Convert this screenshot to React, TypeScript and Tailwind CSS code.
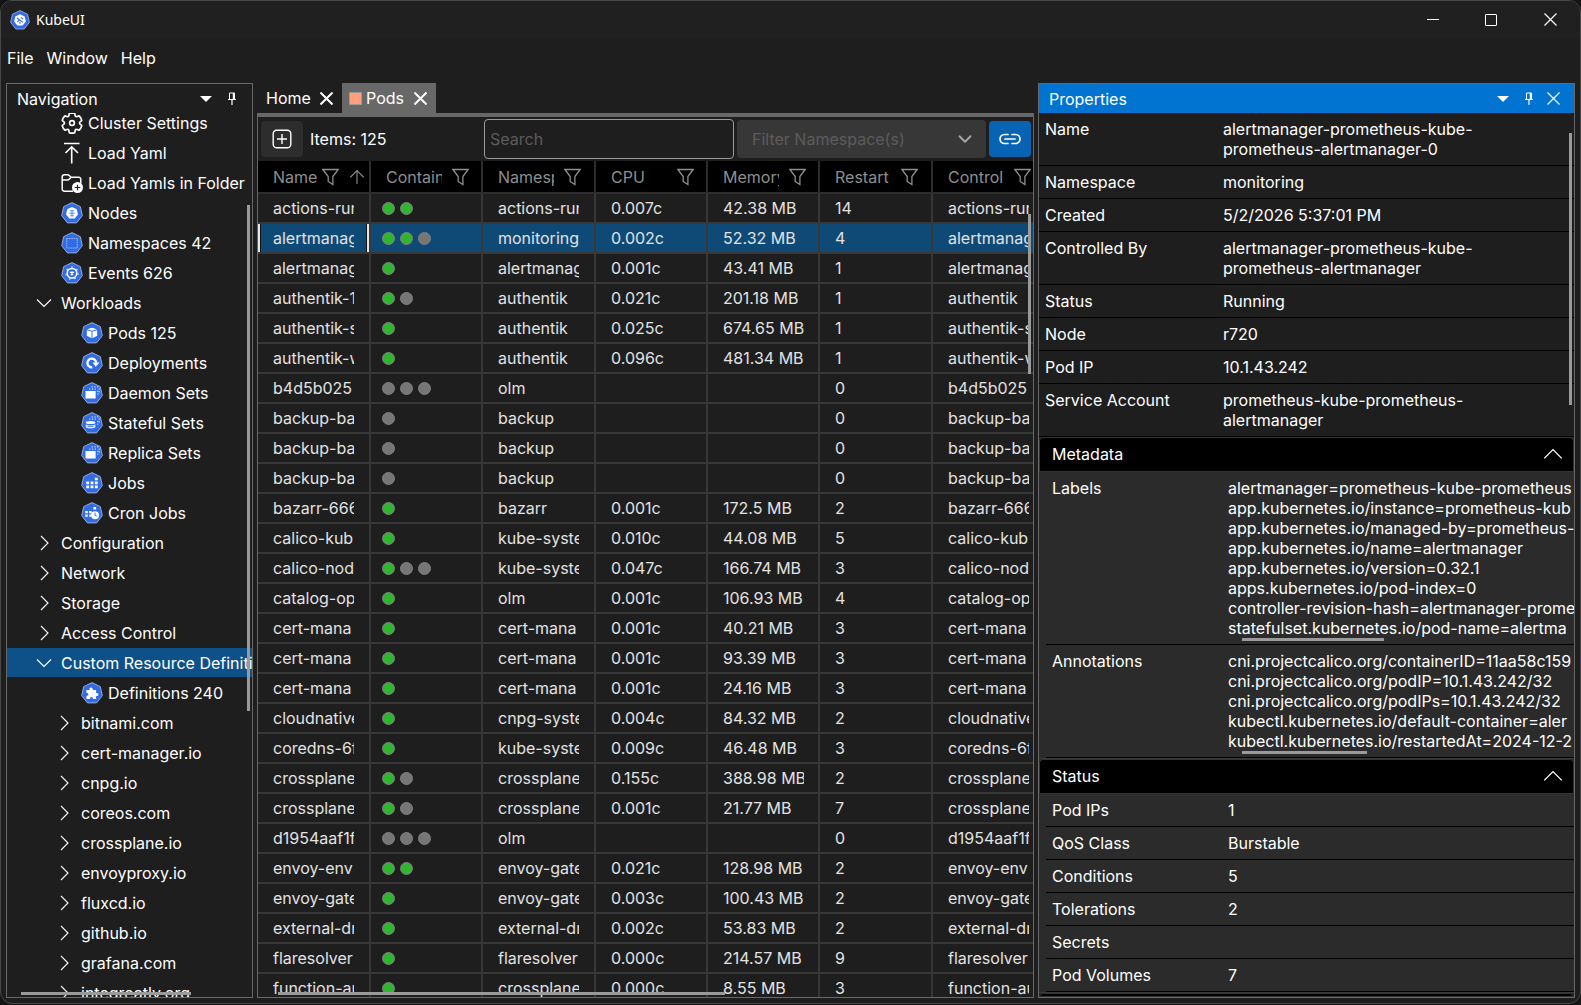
import React from 'react';
import { ArrowUp, ChevronDown } from 'lucide-react';

type Glyph =
  | 'logo'
  | 'node'
  | 'ns'
  | 'event'
  | 'pod'
  | 'deploy'
  | 'daemon'
  | 'stateful'
  | 'replica'
  | 'job'
  | 'cronjob'
  | 'crd';

const StackDots = () => (
  <path
    d="M9 7.8h8.6M18 9.5v5M11.5 5.4h8.5M19.6 7v4.5"
    fill="none"
    stroke="#c9d8fb"
    strokeWidth="1.3"
    strokeDasharray="1.3 1.6"
  />
);

const Stack = () => (
  <>
    <rect x="5.2" y="9.6" width="10.6" height="8" rx="0.6" fill="#fff" />
    <StackDots />
  </>
);

const glyphs: Record<Glyph, React.ReactNode> = {
  logo: (
    <>
      <path d="M12 5.2l5.4 2.6 1.3 5.8-3.7 4.6H9l-3.7-4.6 1.3-5.8z" fill="#fff" />
      <path d="M8.5 9.5l7 5M9 14l2-2M13 9l2.5 1.5M12 16v-2" stroke="#326ce5" strokeWidth="1.3" />
    </>
  ),
  node: (
    <>
      <path d="M12 5.5l5 2.4 1.2 5.3-3.4 4.3H9.2l-3.4-4.3L7 7.9z" fill="#fff" />
      <path d="M10 9.3h4M9 12h6M10 14.7h4M12 9v6" stroke="#326ce5" strokeWidth="0.8" />
    </>
  ),
  ns: <rect x="6.5" y="7" width="11" height="10" fill="none" stroke="#a9c2f7" strokeWidth="0.9" strokeDasharray="1.6 0.8" />,
  event: (
    <>
      <circle cx="12" cy="12" r="5" fill="none" stroke="#fff" strokeWidth="1.6" />
      <circle cx="12" cy="12" r="6.4" fill="none" stroke="#fff" strokeWidth="1.2" strokeDasharray="1.4 4.35" />
      <path d="M9.8 11.2h4.4M10.6 13.5h2.8M12 10v4" stroke="#fff" strokeWidth="1.3" />
    </>
  ),
  pod: (
    <>
      <path d="M12 6.3l5.2 1.5-5.2 1.5-5.2-1.5z" fill="#fff" />
      <path d="M6.6 8.8l4.9 1.5v6.9l-4.9-2.6zM17.4 8.8l-4.9 1.5v6.9l4.9-2.6z" fill="#fff" />
    </>
  ),
  deploy: (
    <>
      <path d="M12.3 16.3a4.6 4.6 0 1 1 4.1-5" fill="none" stroke="#fff" strokeWidth="2.4" />
      <path d="M12.6 11.2h7.2l-3.9 4.4z" fill="#fff" />
    </>
  ),
  daemon: <Stack />,
  stateful: (
    <>
      <ellipse cx="10.5" cy="11.3" rx="5" ry="1.6" fill="#fff" />
      <path d="M5.5 13v3c0 2 10 2 10 0v-3c-1.5 1.5-8.5 1.5-10 0z" fill="#dfe8fd" />
      <path d="M7.5 15.2h6" stroke="#326ce5" strokeWidth="0.9" />
      <StackDots />
    </>
  ),
  replica: <Stack />,
  job: (
    <path
      d="M6 10.3h3v2.8H6zM10.5 10.3h3v2.8h-3zM15 10.3h3v2.8h-3zM6 14.4h3v2.8H6zM10.5 14.4h3v2.8h-3zM15 14.4h3v2.8h-3zM15 6.2h3V9h-3z"
      fill="#fff"
    />
  ),
  cronjob: (
    <>
      <path d="M5 9.6h2.6v2.4H5zM9 9.6h2.6v2.4H9zM5 13.4h2.6v2.4H5zM9 13.4h2.6v2.4H9zM13.5 5.4h2.8V8h-2.8z" fill="#fff" />
      <circle cx="15.2" cy="14" r="4.2" fill="#fff" />
      <path d="M15.2 11.4V14l1.8 1" fill="none" stroke="#326ce5" strokeWidth="1" />
    </>
  ),
  crd: (
    <path
      d="M6.2 8.6h3.3c-.9-3.4 4-3.4 3.2 0h3.6v3.2c3.3-.8 3.3 3.7 0 3V18h-3.4c.7-2.8-3.5-2.8-2.9 0H6.2v-3.4c2.7.6 2.7-3.3 0-2.8z"
      fill="#fff"
    />
  ),
};

const KubeIcon: React.FC<{ glyph: Glyph; className?: string }> = ({ glyph, className = 'size-[22px]' }) => (
  <svg viewBox="0.5 0.5 23 22.5" className={`${className} shrink-0`} aria-hidden="true">
    <path
      d="M12 .9l8.7 4.2 2.1 9.4-6 7.6H7.2l-6-7.6 2.1-9.4z"
      fill="#326ce5"
      stroke="#aeb9d6"
      strokeWidth="0.9"
      strokeLinejoin="round"
    />
    {glyphs[glyph]}
  </svg>
);

const GearIcon = () => (
  <svg viewBox="1.4 1.4 21.2 21.2" className="size-[22px] shrink-0" fill="none" stroke="#fff" strokeWidth="1.6" aria-hidden="true">
    <path d="M12.01 2.25c.74 0 1.47.1 2.18.25.32.07.55.33.59.65l.17 1.53a1.38 1.38 0 0 0 1.92 1.11l1.4-.61c.3-.13.64-.06.85.17a9.79 9.79 0 0 1 2.2 3.8c.1.3 0 .63-.26.82l-1.25.92a1.38 1.38 0 0 0 0 2.22l1.25.92c.26.19.36.52.27.82a9.8 9.8 0 0 1-2.2 3.8.75.75 0 0 1-.85.17l-1.4-.62a1.38 1.38 0 0 0-1.93 1.12l-.17 1.52a.75.75 0 0 1-.58.65 9.52 9.52 0 0 1-4.4 0 .75.75 0 0 1-.57-.65l-.17-1.52a1.38 1.38 0 0 0-1.93-1.11l-1.4.62a.75.75 0 0 1-.85-.18 9.8 9.8 0 0 1-2.2-3.8c-.1-.3 0-.63.27-.82l1.24-.92a1.38 1.38 0 0 0 0-2.22l-1.24-.92a.75.75 0 0 1-.28-.82 9.8 9.8 0 0 1 2.2-3.8c.23-.23.57-.3.86-.17l1.4.62c.4.17.86.15 1.25-.08.38-.22.63-.6.68-1.04l.17-1.53c.04-.32.27-.58.58-.65.72-.16 1.45-.24 2.2-.25z" />
    <circle cx="12" cy="12" r="2.3" />
  </svg>
);

const UploadIcon = () => (
  <svg viewBox="0 0 22 22" className="size-[22px] shrink-0" fill="none" stroke="#fff" strokeWidth="1.6" aria-hidden="true">
    <path d="M3 1.5h15.5M10.7 21.5V5M4.5 11l6.2-6.2L17 11" />
  </svg>
);

const FolderAddIcon = () => (
  <svg viewBox="0 0 22 20" className="h-5 w-[22px] shrink-0" fill="none" aria-hidden="true">
    <path
      d="M12 18.2H3.4a2.2 2.2 0 0 1-2.2-2.2V4A2.2 2.2 0 0 1 3.4 1.7h3.2c.6 0 1 .2 1.4.6L10 4.2h7.6A2.2 2.2 0 0 1 19.8 6.4v4M1.2 7h5.4c.6 0 1-.2 1.4-.6L10 4.2"
      stroke="#fff"
      strokeWidth="1.5"
    />
    <circle cx="16.5" cy="14.5" r="5.5" fill="#fff" />
    <path d="M16.5 11.7v5.6M13.7 14.5h5.6" stroke="#1e1e1e" strokeWidth="1.2" />
  </svg>
);

const FilterIcon = () => (
  <svg viewBox="0 0 17 18" className="h-[18px] w-[17px] shrink-0" fill="none" stroke="#8e8e8e" strokeWidth="1.3" aria-hidden="true">
    <path d="M.9 1.5h15.2l-5.2 7v8L6.2 13.5v-5z" />
  </svg>
);

const PinIcon = () => (
  <svg viewBox="0 0 8 13" className="h-[13px] w-2" fill="none" aria-hidden="true">
    <path d="M1.5 7V1h5v6" stroke="#fff" />
    <path d="M5.5 1v6" stroke="#fff" strokeWidth="1.4" />
    <path d="M0 7.5h8M4 7.5V13" stroke="#fff" strokeWidth="1.2" />
  </svg>
);

const CaretIcon = () => (
  <svg viewBox="0 0 12 6" className="h-1.5 w-3" aria-hidden="true">
    <path d="M0 0h12L6 6z" fill="#fff" />
  </svg>
);

const CrossIcon: React.FC<{ bold?: boolean }> = ({ bold }) => (
  <svg viewBox="0 0 13 13" className="size-[13px]" stroke="#fff" strokeWidth={bold ? 2 : 1.2} aria-hidden="true">
    <path d="M.5.5l12 12M12.5.5l-12 12" />
  </svg>
);

const Chevron: React.FC<{ dir: 'right' | 'down' | 'up'; className?: string }> = ({ dir, className = 'size-4' }) => {
  const d = { right: 'M5 1l7 7-7 7', down: 'M1 4.5l7 7 7-7', up: 'M1 11.5l7-7 7 7' }[dir];
  return (
    <svg viewBox="0 0 16 16" className={`${className} shrink-0`} fill="none" stroke="#fff" strokeWidth="1.1" aria-hidden="true">
      <path d={d} />
    </svg>
  );
};

interface TreeItem {
  label: string;
  level: 1 | 2 | 3;
  icon?: React.ReactNode;
  open?: boolean;
  selected?: boolean;
}

const kube = (label: string, glyph: Glyph, level: 2 | 3 = 3): TreeItem => ({
  label,
  level,
  icon: <KubeIcon glyph={glyph} />,
});

const tree: TreeItem[] = [
  { label: 'Cluster Settings', level: 2, icon: <GearIcon /> },
  { label: 'Load Yaml', level: 2, icon: <UploadIcon /> },
  { label: 'Load Yamls in Folder', level: 2, icon: <FolderAddIcon /> },
  kube('Nodes', 'node', 2),
  kube('Namespaces 42', 'ns', 2),
  kube('Events 626', 'event', 2),
  { label: 'Workloads', level: 1, open: true },
  kube('Pods 125', 'pod'),
  kube('Deployments', 'deploy'),
  kube('Daemon Sets', 'daemon'),
  kube('Stateful Sets', 'stateful'),
  kube('Replica Sets', 'replica'),
  kube('Jobs', 'job'),
  kube('Cron Jobs', 'cronjob'),
  { label: 'Configuration', level: 1 },
  { label: 'Network', level: 1 },
  { label: 'Storage', level: 1 },
  { label: 'Access Control', level: 1 },
  { label: 'Custom Resource Definitions', level: 1, open: true, selected: true },
  kube('Definitions 240', 'crd'),
  { label: 'bitnami.com', level: 2 },
  { label: 'cert-manager.io', level: 2 },
  { label: 'cnpg.io', level: 2 },
  { label: 'coreos.com', level: 2 },
  { label: 'crossplane.io', level: 2 },
  { label: 'envoyproxy.io', level: 2 },
  { label: 'fluxcd.io', level: 2 },
  { label: 'github.io', level: 2 },
  { label: 'grafana.com', level: 2 },
  { label: 'integreatly.org', level: 2 },
];

// name, running containers, finished containers, namespace, cpu, memory, restarts, controlled by
type PodRow = [string, number, number, string, string, string, number, string];

const pods: PodRow[] = [
  ['actions-run', 2, 0, 'actions-run', '0.007c', '42.38 MB', 14, 'actions-run'],
  ['alertmanag', 2, 1, 'monitoring', '0.002c', '52.32 MB', 4, 'alertmanag'],
  ['alertmanag', 1, 0, 'alertmanag', '0.001c', '43.41 MB', 1, 'alertmanag'],
  ['authentik-1', 1, 1, 'authentik', '0.021c', '201.18 MB', 1, 'authentik'],
  ['authentik-s', 1, 0, 'authentik', '0.025c', '674.65 MB', 1, 'authentik-s'],
  ['authentik-w', 1, 0, 'authentik', '0.096c', '481.34 MB', 1, 'authentik-w'],
  ['b4d5b025', 0, 3, 'olm', '', '', 0, 'b4d5b025'],
  ['backup-ba', 0, 1, 'backup', '', '', 0, 'backup-ba'],
  ['backup-ba', 0, 1, 'backup', '', '', 0, 'backup-ba'],
  ['backup-ba', 0, 1, 'backup', '', '', 0, 'backup-ba'],
  ['bazarr-666', 1, 0, 'bazarr', '0.001c', '172.5 MB', 2, 'bazarr-666'],
  ['calico-kub', 1, 0, 'kube-syste', '0.010c', '44.08 MB', 5, 'calico-kub'],
  ['calico-nod', 1, 2, 'kube-syste', '0.047c', '166.74 MB', 3, 'calico-nod'],
  ['catalog-op', 1, 0, 'olm', '0.001c', '106.93 MB', 4, 'catalog-op'],
  ['cert-mana', 1, 0, 'cert-mana', '0.001c', '40.21 MB', 3, 'cert-mana'],
  ['cert-mana', 1, 0, 'cert-mana', '0.001c', '93.39 MB', 3, 'cert-mana'],
  ['cert-mana', 1, 0, 'cert-mana', '0.001c', '24.16 MB', 3, 'cert-mana'],
  ['cloudnative', 1, 0, 'cnpg-syste', '0.004c', '84.32 MB', 2, 'cloudnative'],
  ['coredns-6f', 1, 0, 'kube-syste', '0.009c', '46.48 MB', 3, 'coredns-6f'],
  ['crossplane', 1, 1, 'crossplane', '0.155c', '388.98 MB', 2, 'crossplane'],
  ['crossplane', 1, 1, 'crossplane', '0.001c', '21.77 MB', 7, 'crossplane'],
  ['d1954aaf1f', 0, 3, 'olm', '', '', 0, 'd1954aaf1f'],
  ['envoy-env', 2, 0, 'envoy-gate', '0.021c', '128.98 MB', 2, 'envoy-env'],
  ['envoy-gate', 1, 0, 'envoy-gate', '0.003c', '100.43 MB', 2, 'envoy-gate'],
  ['external-dn', 1, 0, 'external-dn', '0.002c', '53.83 MB', 2, 'external-dn'],
  ['flaresolver', 1, 0, 'flaresolver', '0.000c', '214.57 MB', 9, 'flaresolver'],
  ['function-au', 1, 0, 'crossplane', '0.000c', '8.55 MB', 3, 'function-au'],
];

const columns = [
  { title: 'Name', width: 'w-[113px]' },
  { title: 'Contain', width: 'w-28' },
  { title: 'Namesp', width: 'w-[113px]' },
  { title: 'CPU', width: 'w-28' },
  { title: 'Memory', width: 'w-28' },
  { title: 'Restart', width: 'w-[113px]' },
  { title: 'Control', width: 'w-[113px]' },
];

const summary = [
  ['Name', 'alertmanager-prometheus-kube-prometheus-alertmanager-0'],
  ['Namespace', 'monitoring'],
  ['Created', '5/2/2026 5:37:01 PM'],
  ['Controlled By', 'alertmanager-prometheus-kube-prometheus-alertmanager'],
  ['Status', 'Running'],
  ['Node', 'r720'],
  ['Pod IP', '10.1.43.242'],
  ['Service Account', 'prometheus-kube-prometheus-alertmanager'],
];

const labels = [
  'alertmanager=prometheus-kube-prometheus',
  'app.kubernetes.io/instance=prometheus-kub',
  'app.kubernetes.io/managed-by=prometheus-',
  'app.kubernetes.io/name=alertmanager',
  'app.kubernetes.io/version=0.32.1',
  'apps.kubernetes.io/pod-index=0',
  'controller-revision-hash=alertmanager-prome',
  'statefulset.kubernetes.io/pod-name=alertma',
];

const annotations = [
  'cni.projectcalico.org/containerID=11aa58c159',
  'cni.projectcalico.org/podIP=10.1.43.242/32',
  'cni.projectcalico.org/podIPs=10.1.43.242/32',
  'kubectl.kubernetes.io/default-container=aler',
  'kubectl.kubernetes.io/restartedAt=2024-12-2',
];

const status = [
  ['Pod IPs', '1'],
  ['QoS Class', 'Burstable'],
  ['Conditions', '5'],
  ['Tolerations', '2'],
  ['Secrets', ''],
  ['Pod Volumes', '7'],
];

const TitleBar = () => (
  <header className="flex h-[37px] shrink-0 items-center bg-[#202020] pl-[9px]">
    <KubeIcon glyph="logo" className="size-5" />
    <span className="ml-1.5 font-['Noto_Sans'] text-sm">KubeUI</span>
    <div className="ml-auto flex h-full">
      <button aria-label="Minimize" className="flex w-[58px] items-center justify-center">
        <span className="h-px w-3 bg-white" />
      </button>
      <button aria-label="Maximize" className="flex w-[58px] items-center justify-center">
        <span className="size-3 rounded-[1px] border border-white" />
      </button>
      <button aria-label="Close" className="flex w-[60px] items-center justify-center">
        <CrossIcon />
      </button>
    </div>
  </header>
);

const NavRow: React.FC<{ item: TreeItem }> = ({ item }) => {
  const indent = item.icon
    ? item.level === 2
      ? 'pl-[54px] gap-[5px]'
      : 'pl-[74px] gap-[5px]'
    : item.level === 1
      ? 'pl-[29px] gap-[9px]'
      : 'pl-[49px] gap-[9px]';
  return (
    <li className="h-[30px]">
      <button
        className={`flex h-[29px] w-full items-center overflow-hidden whitespace-nowrap text-left ${indent} ${item.selected ? 'bg-[#0e5188]' : ''}`}
      >
        {item.icon ?? <Chevron dir={item.open ? 'down' : 'right'} />}
        {item.label}
      </button>
    </li>
  );
};

const Navigation = () => (
  <nav className="relative flex w-[247px] shrink-0 flex-col overflow-hidden border border-[#686868]">
    <div className="flex h-[29px] shrink-0 items-center pl-2.5 pr-4">
      <h2 className="text-base">Navigation</h2>
      <button aria-label="Navigation options" className="ml-auto">
        <CaretIcon />
      </button>
      <button aria-label="Pin navigation" className="ml-4">
        <PinIcon />
      </button>
    </div>
    <div className="min-h-0 flex-1 overflow-hidden">
      <ul className="-mt-[5px]">
        {tree.map((item) => (
          <NavRow key={item.label} item={item} />
        ))}
      </ul>
    </div>
    <div className="absolute right-0.5 top-[121px] h-[506px] w-[3px] bg-[#9a9a9a]" />
    <div className="absolute bottom-0.5 left-3.5 h-[3px] w-[170px] bg-[#9a9a9a]" />
  </nav>
);

const Toolbar = () => (
  <div className="flex h-11 shrink-0 items-center pl-[3px] pr-0.5">
    <button aria-label="Add" className="flex h-9 w-[42px] items-center justify-center rounded bg-[#2d2d2d]">
      <svg viewBox="0 0 20 20" className="size-5" fill="none" stroke="#fff" strokeWidth="1.4" aria-hidden="true">
        <rect x="1.2" y="1.2" width="17.6" height="17.6" rx="3.5" />
        <path d="M10 5v10M5 10h10" />
      </svg>
    </button>
    <span className="ml-[7px]">Items: 125</span>
    <input
      aria-label="Search"
      placeholder="Search"
      className="ml-auto h-10 w-[250px] rounded border border-[#9a9a9a] bg-transparent px-[5px] placeholder:text-[#5c5c5c]"
    />
    <div className="relative ml-[3px]">
      <select
        aria-label="Filter Namespace(s)"
        className="block h-[38px] w-[249px] appearance-none rounded bg-[#373737] pl-[15px] text-[#5c5c5c]"
      >
        <option>Filter Namespace(s)</option>
      </select>
      <ChevronDown className="pointer-events-none absolute right-2.5 top-2 size-[22px] text-[#a8a8a8]" />
    </div>
    <button aria-label="Link" className="ml-[3px] flex h-9 w-[42px] items-center justify-center rounded bg-[#0863b5]">
      <svg viewBox="0 0 22 12" className="h-3 w-[22px]" fill="none" stroke="#fff" strokeWidth="1.7" strokeLinecap="round" aria-hidden="true">
        <path d="M9 1.5H5.5a4.5 4.5 0 0 0 0 9H9M13 1.5h3.5a4.5 4.5 0 0 1 0 9H13M6 6h10" />
      </svg>
    </button>
  </div>
);

const Dots: React.FC<{ running: number; done: number }> = ({ running, done }) => (
  <div className="flex gap-[5px]">
    {Array.from({ length: running + done }, (_, i) => (
      <span
        key={i}
        className={`size-[13px] rounded-full border border-[#808080] ${i < running ? 'bg-[#2fb52f]' : 'bg-[#767676]'}`}
      />
    ))}
  </div>
);

const PodTable = () => (
  <div className="relative min-h-0 flex-1 overflow-hidden">
    <table className="w-[788px] table-fixed border-separate border-spacing-0 text-left text-[#e2e2e2]">
      <colgroup>
        {columns.map((c) => (
          <col key={c.title} className={c.width} />
        ))}
      </colgroup>
      <thead>
        <tr className="h-[33px] bg-black text-[#8e8e8e]">
          {columns.map((c, i) => (
            <th key={c.title} className="border-b-2 border-r-2 border-[#2d2d2d] p-0 pl-[15px] font-normal">
              <div className="flex items-center">
                {i === 0 ? (
                  <>
                    <span className="w-11">{c.title}</span>
                    <span className="ml-[5px]">
                      <FilterIcon />
                    </span>
                    <ArrowUp className="ml-[7px] size-[22px] shrink-0" strokeWidth={1.2} />
                  </>
                ) : (
                  <>
                    <span className="mr-2.5 w-14 shrink-0 overflow-hidden">{c.title}</span>
                    <FilterIcon />
                  </>
                )}
              </div>
            </th>
          ))}
        </tr>
      </thead>
      <tbody>
        {pods.map(([name, running, done, ns, cpu, memory, restarts, owner], row) => (
          <tr key={row} className={`h-[30px] ${row === 1 ? 'bg-[#0f4a77]' : ''}`}>
            {[name, null, ns, cpu, memory, restarts, owner].map((value, i) => (
              <td key={i} className={`relative border-b-2 border-r-2 border-[#373737] p-0 ${i === 1 ? 'pl-[11px]' : 'px-[15px]'}`}>
                {i === 1 ? (
                  <Dots running={running} done={done} />
                ) : (
                  <div className="w-[81px] overflow-hidden whitespace-nowrap">{value}</div>
                )}
                {row === 1 && i === 0 && (
                  <span className="absolute inset-0 border-x-2 border-[#e6e6e6] shadow-[inset_1px_0_0_#111,inset_-1px_0_0_#111]" />
                )}
              </td>
            ))}
          </tr>
        ))}
      </tbody>
    </table>
    <div className="absolute right-0.5 top-[53px] h-[160px] w-[3px] bg-[#9a9a9a]" />
    <div className="absolute bottom-0.5 left-5 h-[3px] w-[447px] bg-[#9a9a9a]" />
  </div>
);

const Documents = () => (
  <main className="flex min-w-0 flex-1 flex-col">
    <div className="flex h-[30px] shrink-0">
      <div className="flex w-[85px] items-center justify-between pl-[9px] pr-[9px]">
        <button>Home</button>
        <button aria-label="Close Home">
          <CrossIcon bold />
        </button>
      </div>
      <div className="flex w-[94px] items-center bg-[#686868] pl-[7px] pr-[9px]">
        <span className="size-[13px] border border-[#999] bg-[#ffa07a]" />
        <button className="ml-1">Pods</button>
        <button aria-label="Close Pods" className="ml-auto">
          <CrossIcon bold />
        </button>
      </div>
    </div>
    <div className="flex min-h-0 flex-1 flex-col border border-t-4 border-[#686868]">
      <Toolbar />
      <PodTable />
    </div>
  </main>
);

const Section: React.FC<{ title: string; children?: React.ReactNode }> = ({ title, children }) => (
  <section className="border-b border-[#3a3a3a] bg-[#2b2b2b]">
    <button className="flex h-[35px] w-full items-center justify-between rounded-t border border-[#333] bg-black pb-0.5 pl-3 pr-2.5 text-left">
      {title}
      <Chevron dir="up" className="size-5" />
    </button>
    <dl className="pl-[7px]">{children}</dl>
  </section>
);

const SectionRow: React.FC<{ label: string; values: string[]; bar?: string }> = ({ label, values, bar }) => (
  <div className="relative flex border-b border-black py-1.5 pl-1.5">
    <dt className="w-44 shrink-0 leading-5">{label}</dt>
    <dd className="min-h-5 min-w-0 flex-1 overflow-hidden whitespace-nowrap leading-5">
      {values.map((v) => (
        <div key={v}>{v}</div>
      ))}
    </dd>
    {bar && <span className={`absolute bottom-[3px] left-[196px] h-[3px] bg-[#9a9a9a] ${bar}`} />}
  </div>
);

const Properties = () => (
  <aside className="relative flex w-[537px] shrink-0 flex-col overflow-hidden border border-[#686868]">
    <div className="flex h-[29px] shrink-0 items-center bg-[#0074d0] pl-2.5 pr-3.5">
      <h2 className="text-base">Properties</h2>
      <button aria-label="Properties options" className="ml-auto">
        <CaretIcon />
      </button>
      <button aria-label="Pin properties" className="ml-4">
        <PinIcon />
      </button>
      <button aria-label="Close properties" className="ml-3.5">
        <CrossIcon />
      </button>
    </div>
    <dl>
      {summary.map(([label, value]) => (
        <div key={label} className="flex border-b border-black py-1.5 pl-1.5 leading-5">
          <dt className="w-[178px] shrink-0">{label}</dt>
          <dd className="w-[290px]">{value}</dd>
        </div>
      ))}
    </dl>
    <Section title="Metadata">
      <SectionRow label="Labels" values={labels} bar="w-[142px]" />
      <SectionRow label="Annotations" values={annotations} bar="w-[125px]" />
    </Section>
    <Section title="Status">
      {status.map(([label, value]) => (
        <SectionRow key={label} label={label} values={[value]} />
      ))}
    </Section>
    <div className="min-h-0 flex-1 rounded-t border border-[#333] bg-black" />
    <div className="absolute right-0.5 top-[49px] h-[272px] w-[3px] bg-[#9a9a9a]" />
  </aside>
);

export default function App() {
  return (
    <div className="h-screen bg-[#141414] pb-px font-['Inter',sans-serif] text-base text-white">
      <div className="flex h-full flex-col overflow-hidden rounded-xl border border-[#484848] bg-[#1e1e1e]">
        <TitleBar />
        <div className="flex h-[45px] shrink-0 items-center gap-[13px] pb-1.5 pl-1.5">
          <button>File</button>
          <button>Window</button>
          <button>Help</button>
        </div>
        <div className="flex min-h-0 flex-1 px-[5px] pb-[5px]">
          <Navigation />
          <div className="w-1 shrink-0" />
          <Documents />
          <div className="w-1 shrink-0" />
          <Properties />
        </div>
      </div>
    </div>
  );
}
